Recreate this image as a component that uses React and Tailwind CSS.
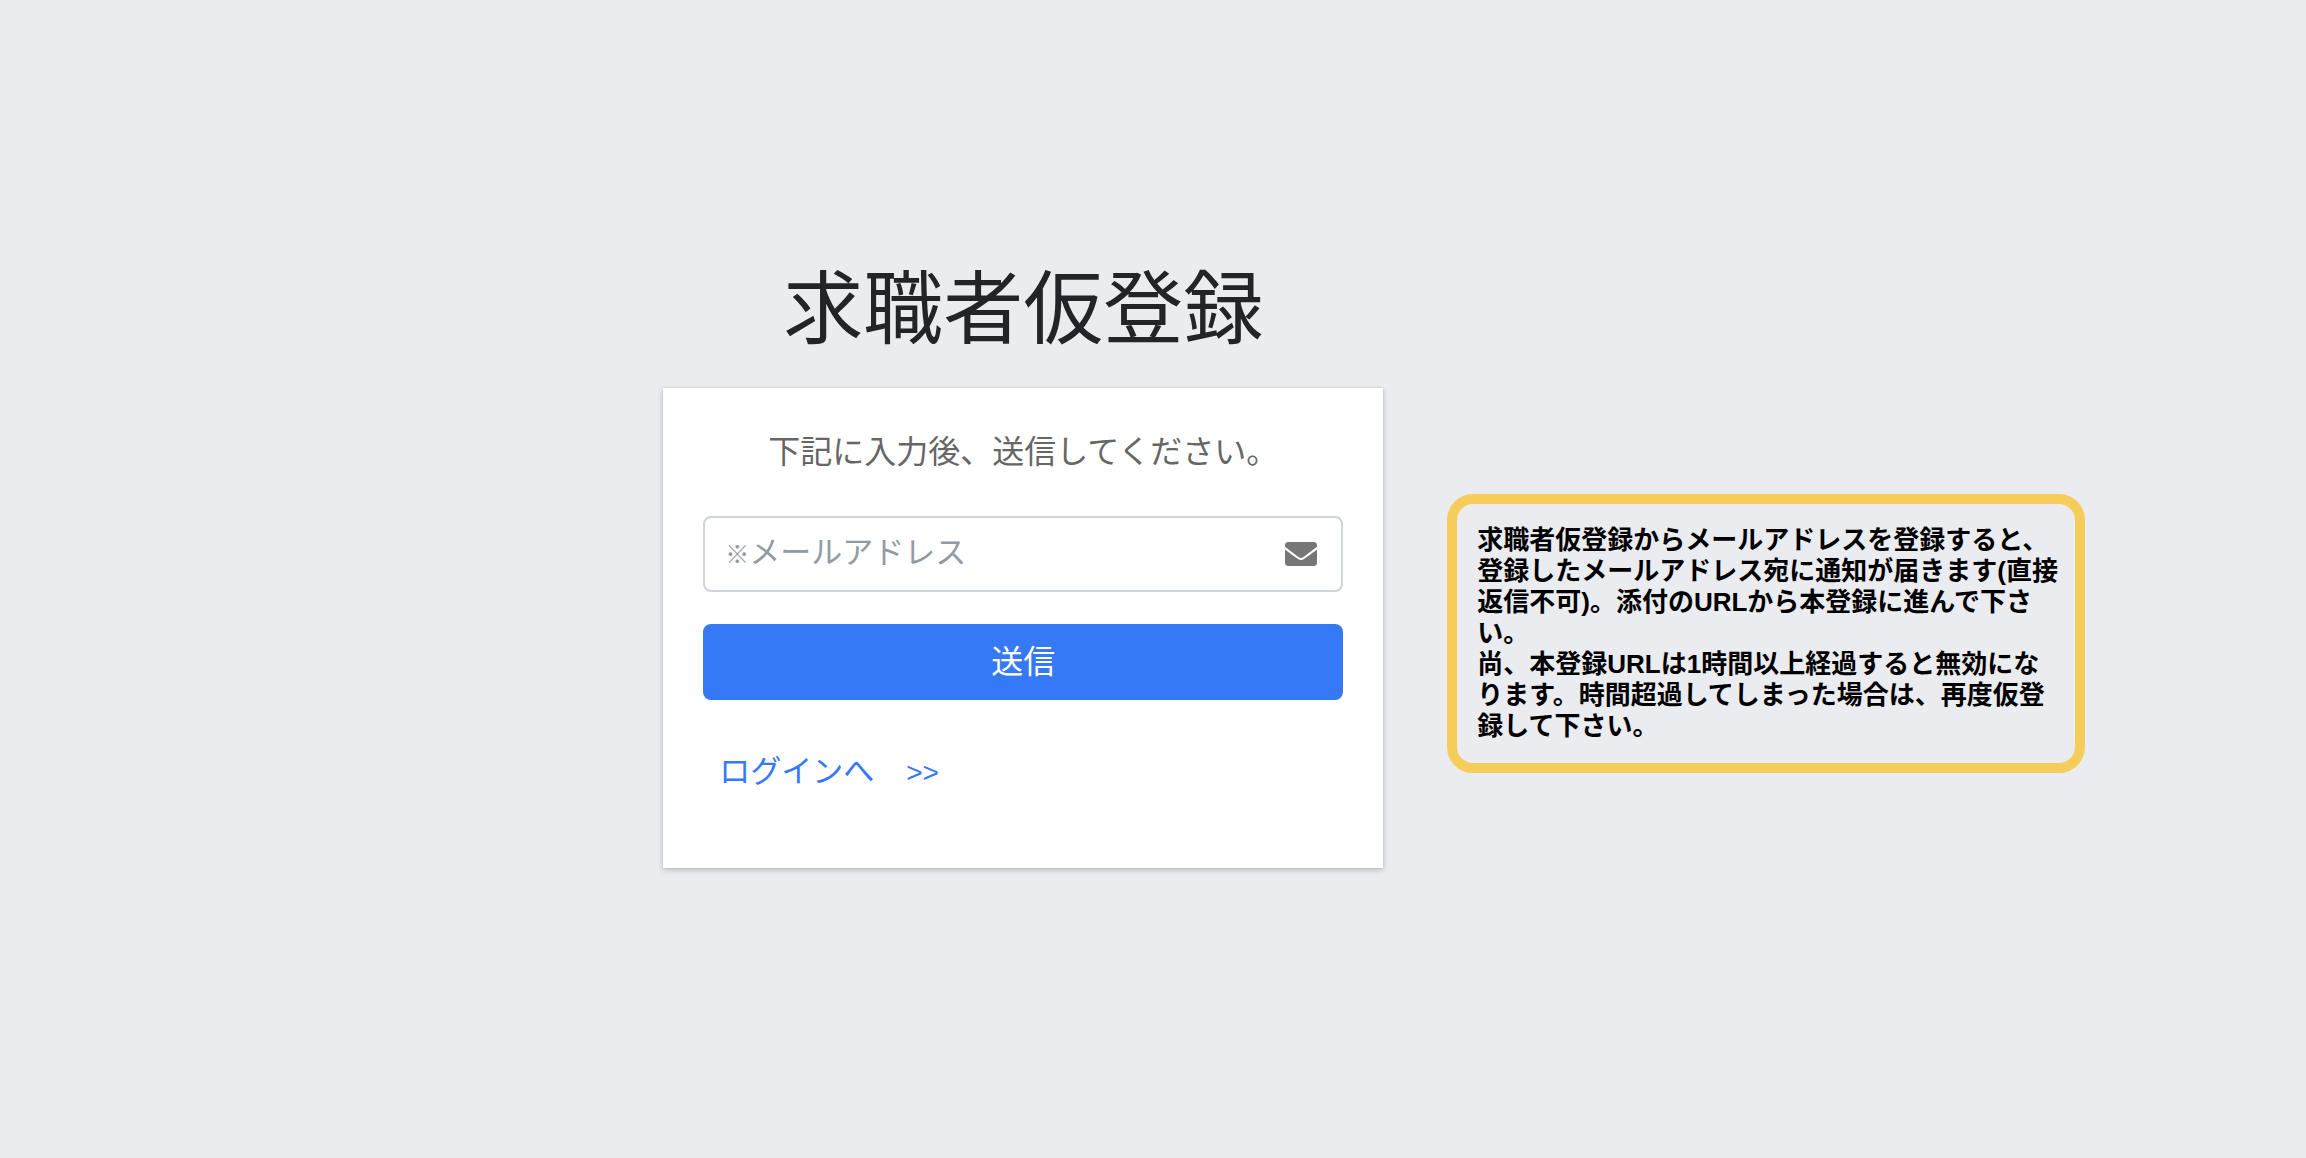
import { FaEnvelope } from "react-icons/fa";

const RegisterForm = () => {
  return (
    <div className="w-[720px] max-w-full">
      <h1 className="mb-[18px] text-center text-[80px] leading-[120px] text-[#212529]">
        求職者仮登録
      </h1>

      {/* Card */}
      <div className="bg-white px-10 pt-10 pb-18 shadow-[0_0_2px_rgba(0,0,0,0.125),0_2px_6px_rgba(0,0,0,0.2)]">
        <p className="mb-10 text-center text-[32px] leading-12 text-[#666666]">
          下記に入力後、送信してください。
        </p>

        <form onSubmit={(e) => e.preventDefault()}>
          <div className="relative mb-8 flex items-center rounded-lg border-2 border-[#ced4da] pr-6">
            <input
              id="email"
              type="email"
              placeholder=" "
              className="peer h-18 min-w-0 flex-1 px-5 text-[31px] text-[#495057] outline-none"
            />
            <label
              htmlFor="email"
              className="invisible absolute left-5 text-[31px] leading-12 text-[#939ba2] peer-placeholder-shown:visible"
            >
              <span className="text-[24px] font-medium">※</span>メールアドレス
            </label>
            <FaEnvelope className="size-8 text-[#777777]" />
          </div>

          <button
            type="submit"
            className="h-19 w-full rounded-lg bg-[#3579f7] text-[32px] leading-12 text-white"
          >
            送信
          </button>
        </form>

        <div className="mt-12 flex h-12 pl-4">
          <a href="#login" className="text-[31px] leading-12 text-[#3579f7]">
            ログインへ<span className="ml-8 text-[28px]">&gt;&gt;</span>
          </a>
        </div>
      </div>
    </div>
  );
};

const Notice = () => {
  return (
    <aside className="mt-[244px] ml-16 rounded-[26px] border-10 border-[#f6cd5b] py-[21px] pr-[17px] pl-5">
      <p className="text-[26px] leading-[31px] font-bold whitespace-nowrap text-black">
        求職者仮登録からメールアドレスを登録すると、
        <br />
        登録したメールアドレス宛に通知が届きます(直接
        <br />
        返信不可)。添付のURLから本登録に進んで下さ
        <br />
        い。
        <br />
        尚、本登録URLは1時間以上経過すると無効にな
        <br />
        ります。時間超過してしまった場合は、再度仮登
        <br />
        録して下さい。
      </p>
    </aside>
  );
};

const App = () => {
  return (
    <main
      lang="ja"
      className="grid min-h-screen grid-cols-[3fr_auto_auto_1fr] items-start bg-[#eaecf0] pt-[250px] font-['Liberation_Sans','Noto_Sans_CJK_JP',sans-serif]"
    >
      <div className="col-start-2">
        <RegisterForm />
      </div>
      <Notice />
    </main>
  );
};

export default App;
